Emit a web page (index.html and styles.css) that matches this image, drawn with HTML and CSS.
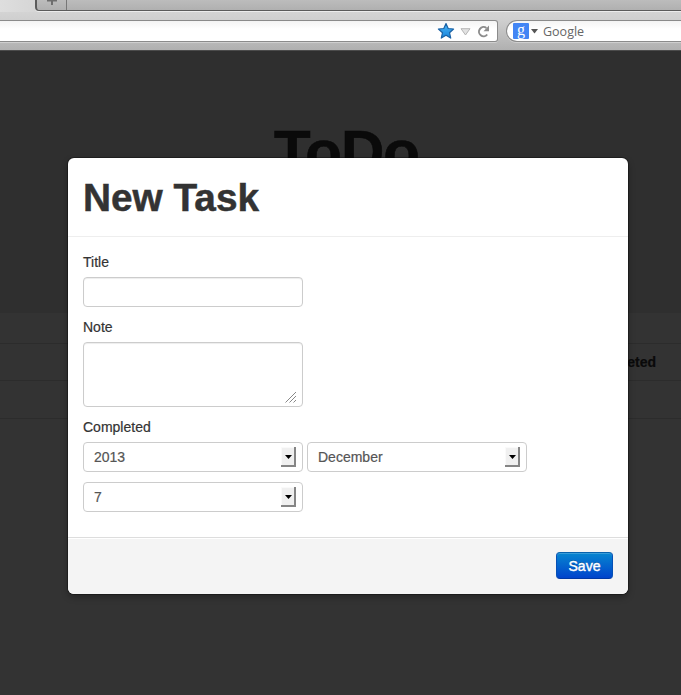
FILE: index.html
```html
<!DOCTYPE html>
<html lang="en">
<head>
<meta charset="utf-8">
<title>ToDo</title>
<link rel="stylesheet" href="styles.css">
</head>
<body>
<header class="browser">
  <div class="tabstrip"><div class="tabwell"><span class="newtab"><svg width="12" height="7" viewBox="0 0 12 7"><path d="M1 0h10v1.500H7V5H5V1.500H1z" fill="#6e6e6e"/></svg></span></div></div>
  <div class="toolbar">
    <div class="urlbar">
      <svg width="18" height="18" viewBox="0 0 18 18"><defs><linearGradient id="sg" x1="0" y1="0" x2="0" y2="1"><stop offset="0" stop-color="#4cb5f5"/><stop offset="1" stop-color="#1684dc"/></linearGradient></defs><path d="M9 1.500l2.200 5 5.400.5-4.100 3.700 1.200 5.400L9 13.300l-4.700 2.800 1.200-5.400L1.400 7l5.400-.5z" fill="url(#sg)" stroke="#1b62a5" stroke-width="1.200" stroke-linejoin="round"/></svg>
      <svg class="down" width="11" height="8" viewBox="0 0 11 8"><path d="M1 .7h9L5.500 7z" fill="#e2e2e2" stroke="#b5b5b5"/></svg>
      <svg class="reload" width="13" height="13" viewBox="0 0 13 13"><path d="M9.400 3A4.600 4.600 0 1 0 10.200 9.500" fill="none" stroke="#8c8c8c" stroke-width="2"/><path d="M12 .4v5.900H6.500z" fill="#8c8c8c"/></svg>
    </div>
    <div class="search">
      <span class="engine">g</span>
      <svg class="caret" width="7" height="5" viewBox="0 0 7 5"><path d="M0 0h7L3.500 4.500z" fill="#555"/></svg>
      <span class="hint">Google</span>
    </div>
  </div>
</header>
<main class="page">
  <section class="hero"><h1>ToDo</h1></section>
  <div class="row row-first"></div>
  <div class="row row-head"><b>Completed</b></div>
  <div class="row row-item"></div>
  <div class="row row-end"></div>
</main>
<form class="modal">
  <div class="modal-header"><h2>New Task</h2></div>
  <div class="modal-body">
    <label for="title">Title</label>
    <input id="title" class="field" type="text">
    <label for="note">Note</label>
    <div class="note-wrap"><textarea id="note" class="field note"></textarea>
      <svg class="grip" width="12" height="12" viewBox="0 0 12 12"><path d="M.5 11.500l10.500-10.500M4.500 11.500l6.500-6.500M8.500 11.500l2.500-2.500" stroke="#888" stroke-width="1" fill="none"/></svg></div>
    <label>Completed</label>
    <div class="selects">
      <div class="field select"><span>2013</span><i class="arrow"><svg width="7" height="4" viewBox="0 0 7 4"><path d="M0 0h7L3.500 4z"/></svg></i></div>
      <div class="field select"><span>December</span><i class="arrow"><svg width="7" height="4" viewBox="0 0 7 4"><path d="M0 0h7L3.500 4z"/></svg></i></div>
      <div class="field select"><span>7</span><i class="arrow"><svg width="7" height="4" viewBox="0 0 7 4"><path d="M0 0h7L3.500 4z"/></svg></i></div>
    </div>
  </div>
  <div class="modal-footer"><button class="save" type="button">Save</button></div>
</form>
</body>
</html>
```

FILE: styles.css
```css
* { box-sizing: border-box; }
body {
  margin: 0;
  height: 695px;
  overflow: hidden;
  position: relative;
  background: #333;
  color: #333;
  font: 14px/20px "Liberation Sans", Arial, sans-serif;
  -webkit-text-stroke: .2px;
}
.browser { height: 51px; border-bottom: 1px solid #4b4b4b; background: linear-gradient(#dadada, #cfcfcf 20px, #b0b0b0); -webkit-text-stroke: 0; }
.tabstrip { height: 12px; padding-left: 35px; background: linear-gradient(90deg, #dedede, #d0d0d0 60px); }
.tabwell {
  height: 11px;
  background: linear-gradient(#bcbcbc, #b0b0b0);
  border: solid #5b5b5b;
  border-width: 0 0 1px 2px;
  border-bottom-left-radius: 4px;
  box-shadow: 0 1px #ececec;
}
.newtab { display: block; width: 30px; height: 10px; padding-left: 9px; border-right: 1px solid #777; line-height: 0; }
.toolbar { height: 38px; padding-top: 8px; display: flex; gap: 8px; }
.urlbar, .search {
  height: 22px;
  display: flex;
  align-items: center;
  background: linear-gradient(#f4f4f4, #fff 8px);
  border: 1px solid #8b8b8b;
  box-shadow: 0 1px #cfcfcf;
}
.urlbar { width: 498px; border-left: 0; border-radius: 0 3px 3px 0; justify-content: flex-end; padding-right: 7px; }
.down { margin: 1px 6px 0 5px; }
.search { flex: 1; border-right: 0; border-radius: 11px 0 0 11px; padding-left: 6px; }
.engine {
  width: 16px;
  height: 16px;
  border-radius: 1px;
  background: #4285f4;
  color: #fff;
  font: 16px/14px "Liberation Serif", serif;
  text-align: center;
}
.caret { margin: 0 5px 0 2px; }
.hint { padding-top: 1px; font: 12.500px/18px "Open Sans", sans-serif; color: #666; }
.page { height: 644px; }
.hero { height: 262px; padding-top: 71px; background: #2f2f2f; }
.hero h1 {
  margin: 0;
  padding-left: 12px;
  text-align: center;
  font-size: 60px;
  line-height: 60px;
  letter-spacing: -1px;
  color: #0a0a0a;
  -webkit-text-stroke: .6px;
}
.row { border-bottom: 1px solid #2c2c2c; }
.row-first { height: 31px; }
.row-head { height: 37px; padding: 8px 25px 0; text-align: right; color: #0a0a0a; }
.row-item { height: 38px; }
.row-end { border: 0; }
.modal {
  position: absolute;
  left: 68px;
  top: 158px;
  width: 560px;
  height: 436px;
  border-radius: 6px;
  overflow: hidden;
  background: #fff;
  box-shadow: 0 0 0 1px rgba(0, 0, 0, .3), 0 3px 7px rgba(0, 0, 0, .3);
}
.modal-header { height: 79px; padding: 10px 15px 8px; border-bottom: 1px solid #eee; }
.modal-header h2 { margin: 0; font-size: 38.800px; line-height: 60px; -webkit-text-stroke: .5px; }
.modal-body { height: 300px; padding: 15px; }
label { display: block; margin-bottom: 5px; }
.field {
  display: block;
  width: 220px;
  height: 30px;
  margin: 0 0 10px;
  padding: 4px 6px;
  border: 1px solid #ccc;
  border-radius: 4px;
  background: #fff;
  color: #555;
  font: inherit;
  box-shadow: inset 0 1px 1px rgba(0, 0, 0, .075);
}
.note { height: 65px; resize: none; }
.note-wrap { position: relative; width: 220px; }
.grip { position: absolute; right: 6px; bottom: 4px; }
.selects { display: flex; flex-wrap: wrap; column-gap: 4px; }
.select { display: flex; justify-content: space-between; padding: 4px 6px 4px 10px; box-shadow: none; }
.arrow {
  width: 15px;
  height: 20px;
  padding: 2px 0 0 2px;
  display: flex;
  align-items: center;
  justify-content: center;
  background: #f0f0f0;
  border: solid #858585;
  border-width: 0 2px 2px 0;
  box-shadow: inset 1px 1px #fafafa;
}
.modal-footer {
  height: 57px;
  padding: 14px 15px 15px;
  display: flex;
  justify-content: flex-end;
  background: #f4f4f4;
  border-top: 1px solid #ddd;
  box-shadow: inset 0 1px #fff;
}
.save {
  width: 57px;
  height: 27px;
  padding: 0;
  border: 1px solid;
  border-color: #0762ad #0650b5 #0038a4;
  border-radius: 4px;
  background: linear-gradient(#0786d0, #0044cc);
  box-shadow: inset 0 1px rgba(255, 255, 255, .2);
  color: #fff;
  font: 14px/20px "Liberation Sans", Arial, sans-serif;
  -webkit-text-stroke: .4px #fff;
  text-shadow: 0 -1px rgba(0, 0, 0, .25);
}
```
